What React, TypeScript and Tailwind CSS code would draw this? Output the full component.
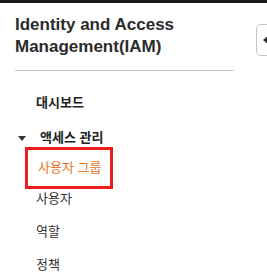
import { useState } from 'react'

const font = { fontFamily: '"Liberation Sans", "Noto Sans CJK KR", sans-serif' }

const App = () => {
  const [active] = useState('사용자 그룹')

  return (
    <div className="w-[267px] h-[274px] overflow-hidden bg-white relative" style={font}>
      <div className="h-[3px] bg-[#1b1b1b]" />
      <div className="flex">
        <div className="w-[234px] shrink-0 pl-[15px]">
          <div className="pt-[11px] pb-[12px] border-b border-[#c9c9c9] text-[17px] leading-[22px] font-bold text-[#2b2b2b]">
            Identity and Access
            <br />
            Management(IAM)
          </div>
          <nav className="pt-[23px] text-[13px] text-[#333]">
            <div className="pl-[21px] font-bold text-[#222] leading-[18px]">대시보드</div>
            <div className="mt-[17px] flex items-center leading-[18px]">
              <span className="w-0 h-0 border-x-[4px] border-x-transparent border-t-[5px] border-t-[#333] ml-[3px] mr-[14px]" />
              <span className="font-bold text-[#222]">액세스 관리</span>
            </div>
            <div className="ml-[10px] w-[88px] h-[42px] border-[3px] border-[#ee1c1c] flex items-center pl-[10px]">
              <span className={active === '사용자 그룹' ? 'text-[#e8731c]' : ''}>사용자 그룹</span>
            </div>
            <div className="pl-[21px] mt-[1px] leading-[18px]">사용자</div>
            <div className="pl-[21px] mt-[15px] leading-[18px]">역할</div>
            <div className="pl-[21px] mt-[15px] leading-[18px]">정책</div>
          </nav>
        </div>
        <div className="ml-[22px] mt-[21px] shrink-0 w-[20px] h-[32px] border border-[#c6c6c6] rounded-[5px] flex items-center pl-[6px]">
          <span className="w-0 h-0 border-y-[4px] border-y-transparent border-r-[5px] border-r-[#222]" />
        </div>
      </div>
    </div>
  )
}

export default App
